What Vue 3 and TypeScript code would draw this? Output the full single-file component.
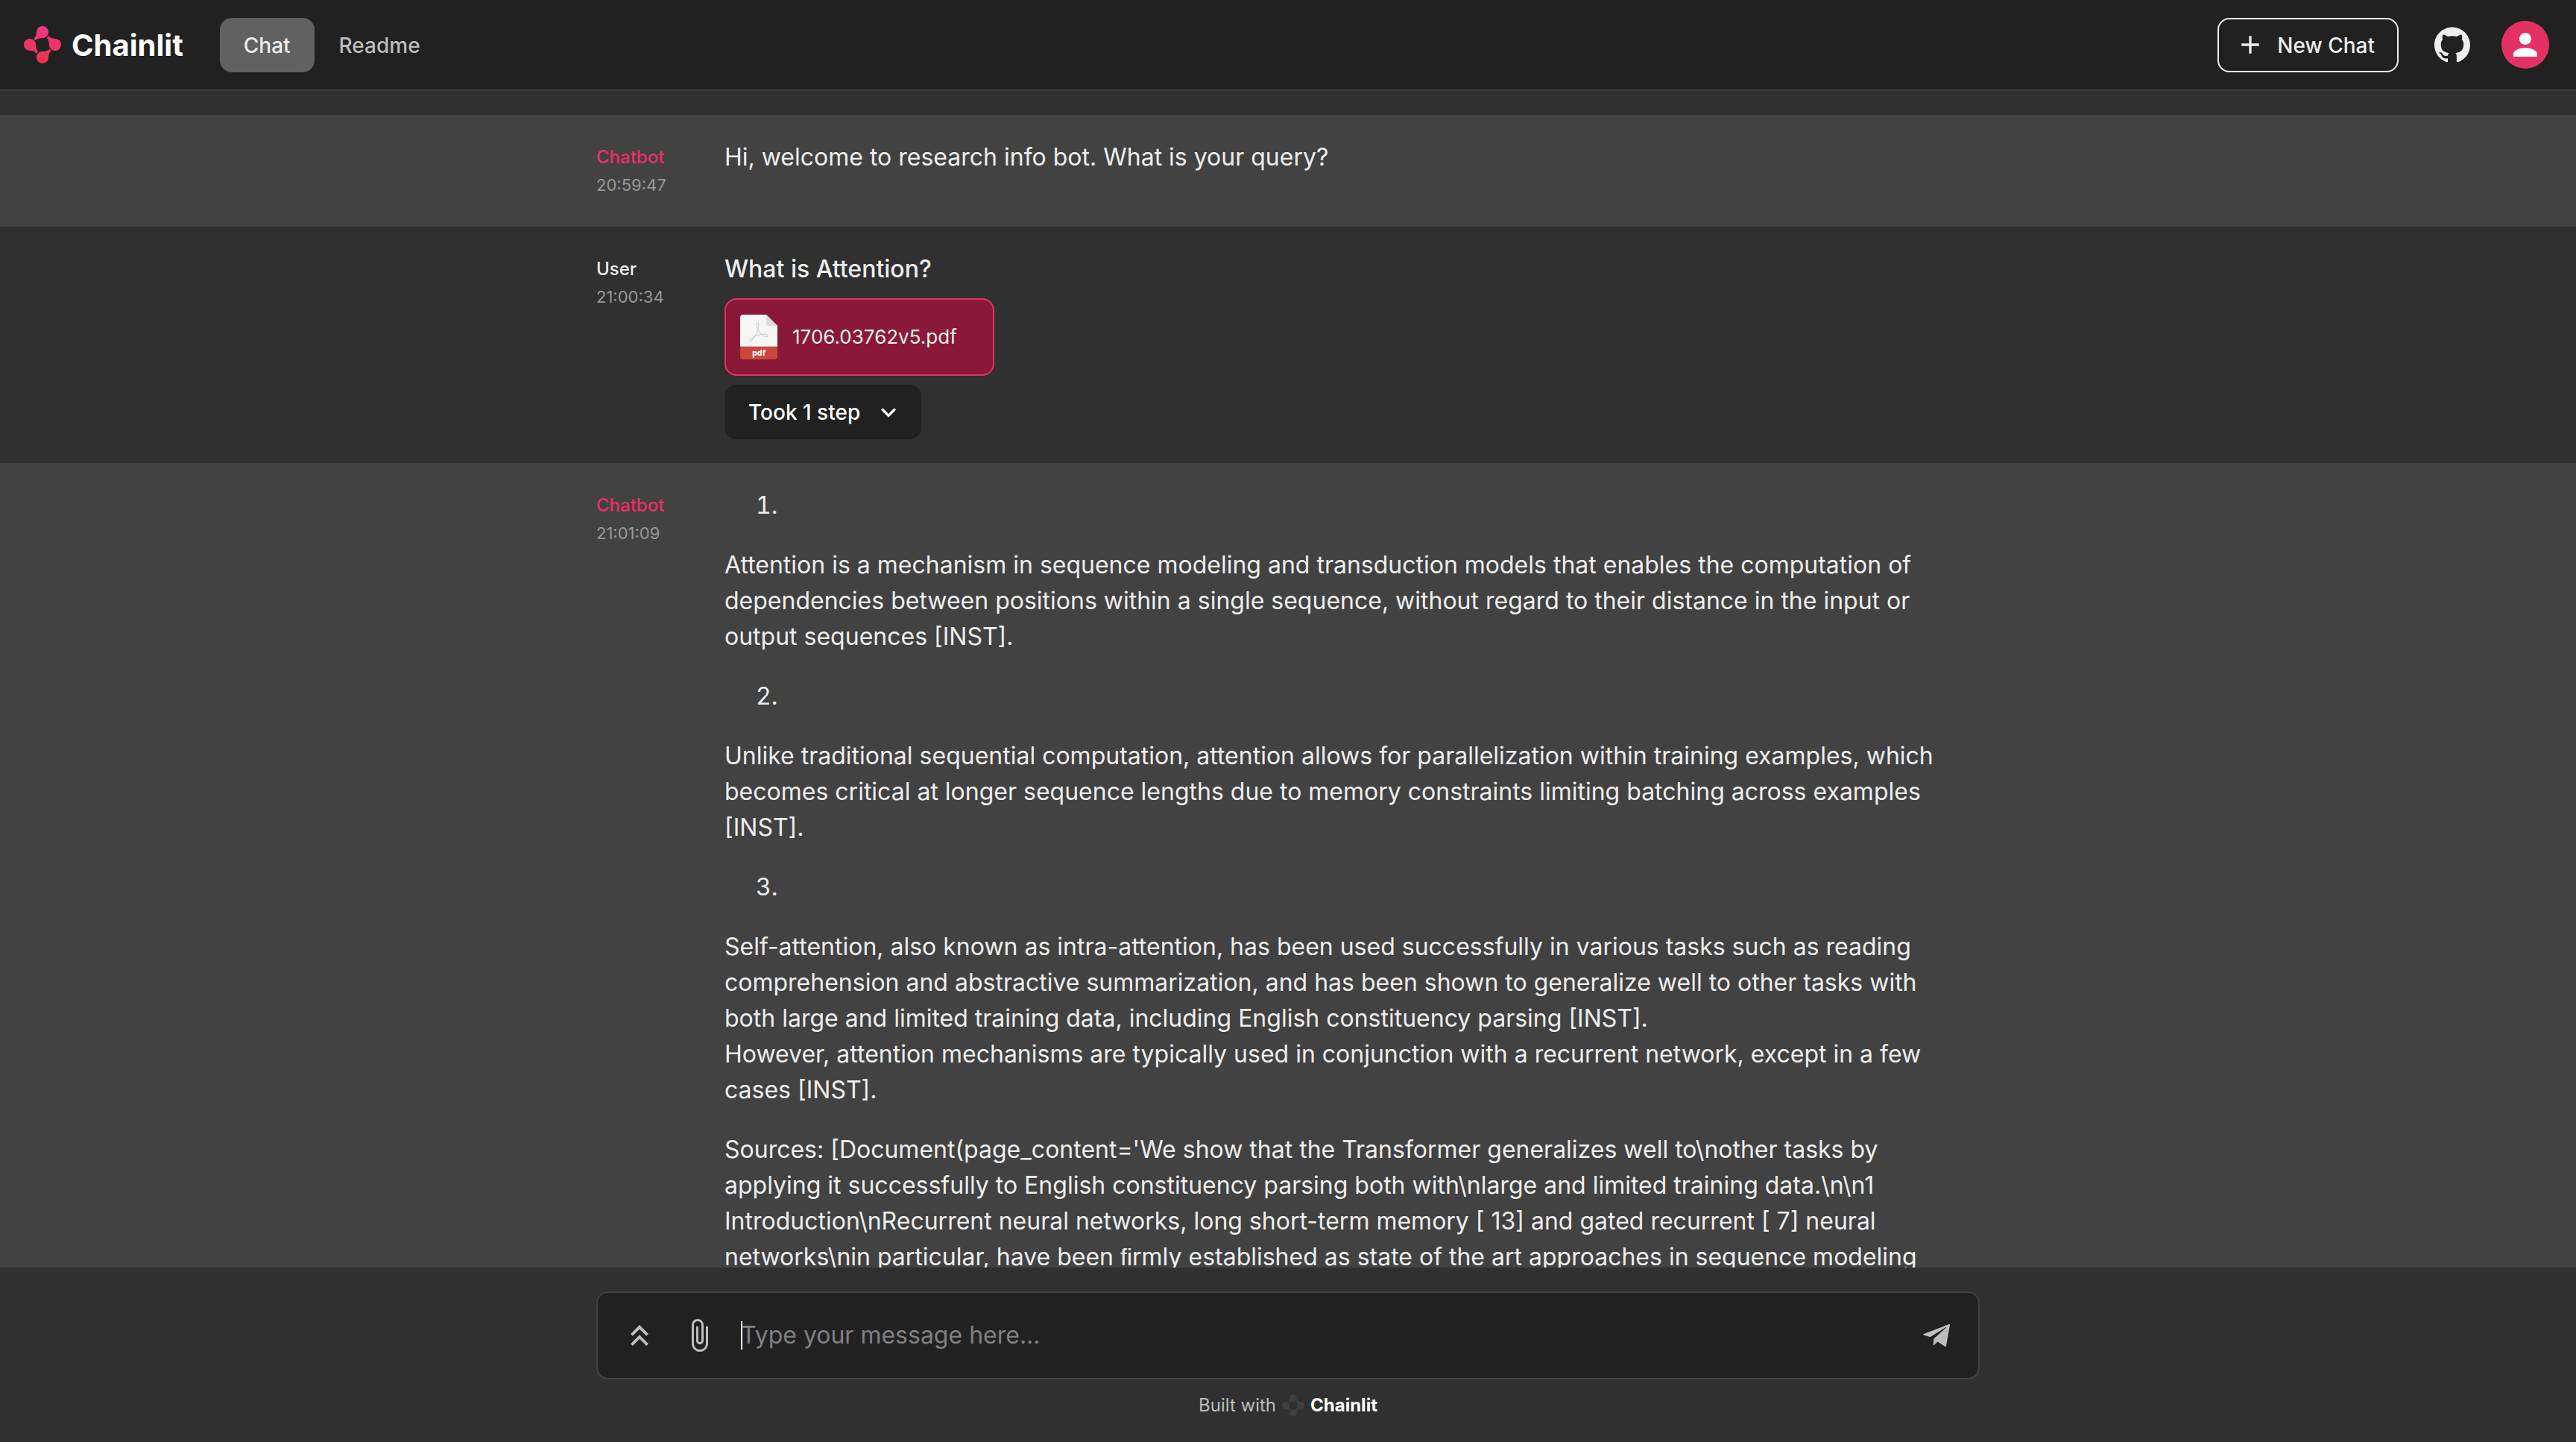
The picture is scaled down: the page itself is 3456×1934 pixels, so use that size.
<script setup lang="ts">
import { ref } from 'vue'

interface Block {
  kind: 'paragraph' | 'item'
  text?: string
  start?: number
}

interface Message {
  author: string
  time: string
  fromBot: boolean
  blocks: Block[]
  file?: string
  steps?: string
}

const draft = ref('')
const petalAngles = [0, 90, 180, 270]
const petal = 'M40 50C51 41 50 33 51 22A24 23 0 0 1 99 24C99 38 90 46 77 48C64 49 56 49 47 58Z'

const messages: Message[] = [
  {
    author: 'Chatbot',
    time: '20:59:47',
    fromBot: true,
    blocks: [{ kind: 'paragraph', text: 'Hi, welcome to research info bot. What is your query?' }],
  },
  {
    author: 'User',
    time: '21:00:34',
    fromBot: false,
    blocks: [{ kind: 'paragraph', text: 'What is Attention?' }],
    file: '1706.03762v5.pdf',
    steps: 'Took 1 step',
  },
  {
    author: 'Chatbot',
    time: '21:01:09',
    fromBot: true,
    blocks: [
      { kind: 'item', start: 1 },
      {
        kind: 'paragraph',
        text: 'Attention is a mechanism in sequence modeling and transduction models that enables the computation of dependencies between positions within a single sequence, without regard to their distance in the input or output sequences [INST].',
      },
      { kind: 'item', start: 2 },
      {
        kind: 'paragraph',
        text: 'Unlike traditional sequential computation, attention allows for parallelization within training examples, which becomes critical at longer sequence lengths due to memory constraints limiting batching across examples [INST].',
      },
      { kind: 'item', start: 3 },
      {
        kind: 'paragraph',
        text: 'Self-attention, also known as intra-attention, has been used successfully in various tasks such as reading comprehension and abstractive summarization, and has been shown to generalize well to other tasks with both large and limited training data, including English constituency parsing [INST].\nHowever, attention mechanisms are typically used in conjunction with a recurrent network, except in a few cases [INST].',
      },
      {
        kind: 'paragraph',
        text: "Sources: [Document(page_content='We show that the Transformer generalizes well to\\nother tasks by applying it successfully to English constituency parsing both with\\nlarge and limited training data.\\n\\n1 Introduction\\nRecurrent neural networks, long short-term memory [ 13] and gated recurrent [ 7] neural networks\\nin particular, have been \uFB01rmly established as state of the art approaches in sequence modeling",
      },
    ],
  },
]
</script>

<template>
  <div class="app">
    <header class="topbar">
      <a class="brand" href="#">
        <svg class="mark" viewBox="0 0 150 150" aria-hidden="true">
          <defs>
            <linearGradient id="brand-fill" x1="0" y1="0" x2="0" y2="1">
              <stop offset="0" stop-color="#ec3585" />
              <stop offset="1" stop-color="#ed344f" />
            </linearGradient>
            <clipPath id="brand-shape">
              <path v-for="a in petalAngles" :key="a" :d="petal" :transform="`rotate(${a} 75 75)`" />
            </clipPath>
          </defs>
          <rect width="150" height="150" fill="url(#brand-fill)" clip-path="url(#brand-shape)" />
        </svg>
        <span class="wordmark">Chainlit</span>
      </a>
      <nav class="tabs">
        <button class="tab active" type="button">Chat</button>
        <button class="tab" type="button">Readme</button>
      </nav>
      <div class="actions">
        <button class="new-chat" type="button">
          <svg class="icon-md" viewBox="0 0 24 24" aria-hidden="true"><path d="M19 13h-6v6h-2v-6H5v-2h6V5h2v6h6v2z" /></svg>
          <span>New Chat</span>
        </button>
        <a class="github" href="#" aria-label="GitHub">
          <svg class="icon-lg" viewBox="0 0 24 24" aria-hidden="true">
            <path d="M12 .297c-6.63 0-12 5.373-12 12 0 5.303 3.438 9.8 8.205 11.385.6.113.82-.258.82-.577 0-.285-.01-1.04-.015-2.04-3.338.724-4.042-1.61-4.042-1.61C4.422 18.07 3.633 17.7 3.633 17.7c-1.087-.744.084-.729.084-.729 1.205.084 1.838 1.236 1.838 1.236 1.07 1.835 2.809 1.305 3.495.998.108-.776.417-1.305.76-1.605-2.665-.3-5.466-1.332-5.466-5.93 0-1.31.465-2.38 1.235-3.22-.135-.303-.54-1.523.105-3.176 0 0 1.005-.322 3.3 1.23.96-.267 1.98-.399 3-.405 1.02.006 2.04.138 3 .405 2.28-1.552 3.285-1.23 3.285-1.23.645 1.653.24 2.873.12 3.176.765.84 1.23 1.91 1.23 3.22 0 4.61-2.805 5.625-5.475 5.92.42.36.81 1.096.81 2.22 0 1.606-.015 2.896-.015 3.286 0 .315.21.69.825.57C20.565 22.092 24 17.592 24 12.297c0-6.627-5.373-12-12-12" />
          </svg>
        </a>
        <button class="avatar" type="button" aria-label="Account">
          <svg class="icon-lg" viewBox="0 0 24 24" aria-hidden="true">
            <path d="M12 12c2.21 0 4-1.79 4-4s-1.79-4-4-4-4 1.79-4 4 1.79 4 4 4zm0 2c-2.67 0-8 1.34-8 4v2h16v-2c0-2.66-5.33-4-8-4z" />
          </svg>
        </button>
      </div>
    </header>

    <main class="thread">
      <article v-for="m in messages" :key="m.time" class="message" :class="{ bot: m.fromBot }">
        <div class="message-inner">
          <div class="meta">
            <span class="author">{{ m.author }}</span>
            <time class="time">{{ m.time }}</time>
          </div>
          <div class="content">
            <div class="blocks">
              <template v-for="(b, i) in m.blocks" :key="i">
                <ol v-if="b.kind === 'item'" class="list" :start="b.start"><li></li></ol>
                <p v-else class="text">{{ b.text }}</p>
              </template>
            </div>
            <a v-if="m.file" class="file" href="#">
              <svg class="file-icon" viewBox="0 0 50 60" aria-hidden="true">
                <path d="M4 0H35L50 15V43H0V4A4 4 0 0 1 4 0Z" fill="#f6f6f6" />
                <path d="M35 0L50 15H39A4 4 0 0 1 35 11Z" fill="#dcdcdc" />
                <path d="M0 42H50V43H0Z" fill="#d0d0d0" />
                <path d="M0 43H50V56A4 4 0 0 1 46 60H4A4 4 0 0 1 0 56Z" fill="#c9483a" />
                <path d="M24 11C20 11 23 20 27 25C31 30 38 31 37 28C36 25 28 26 22 28C16 30 12 34 13 35.500C15 37 20 30 23 23C25 17 26 11 24 11Z" fill="none" stroke="#d2d2d2" stroke-width="1.200" />
                <text x="25" y="55" text-anchor="middle" class="file-ext">pdf</text>
              </svg>
              <span>{{ m.file }}</span>
            </a>
            <button v-if="m.steps" class="steps" type="button">
              {{ m.steps }}
              <svg class="icon-md" viewBox="0 0 24 24" aria-hidden="true"><path d="M16.59 8.59 12 13.17 7.41 8.59 6 10l6 6 6-6z" /></svg>
            </button>
          </div>
        </div>
      </article>
    </main>

    <footer class="dock">
      <form class="composer" @submit.prevent>
        <button class="tool" type="button" aria-label="Show history">
          <svg class="icon-lg" viewBox="0 0 24 24" aria-hidden="true">
            <path d="M6 17.590 7.410 19 12 14.420 16.590 19 18 17.590l-6-6z" />
            <path d="m6 11 1.410 1.410L12 7.830l4.590 4.580L18 11l-6-6z" />
          </svg>
        </button>
        <button class="tool" type="button" aria-label="Attach files">
          <svg class="icon-lg" viewBox="0 0 24 24" aria-hidden="true">
            <path d="M16.5 6v11.5c0 2.21-1.79 4-4 4s-4-1.79-4-4V5c0-1.38 1.12-2.5 2.5-2.5s2.5 1.12 2.5 2.5v10.5c0 .55-.45 1-1 1s-1-.45-1-1V6H10v9.5c0 1.38 1.12 2.5 2.5 2.5s2.5-1.12 2.5-2.5V5c0-2.21-1.79-4-4-4S7 2.79 7 5v12.5c0 3.04 2.46 5.5 5.5 5.5s5.5-2.46 5.5-5.5V6h-1.500z" />
          </svg>
        </button>
        <label class="field">
          <span class="caret"></span>
          <input v-model="draft" type="text" placeholder="Type your message here..." aria-label="Message" />
        </label>
        <button class="tool" type="submit" aria-label="Send message">
          <svg class="send" viewBox="0 0 36 30" aria-hidden="true">
            <path d="M0.500 13.200L34.800 0.100Q36.200 0 36 1.400L31 29Q30.600 30.300 29.300 29.800L19.500 23.600L14.600 28.200Q13.700 28.700 13.700 27.600L14.400 19.500L31.200 4.500L30.700 4L9.600 17.300L0.600 14.500Q-0.400 13.800 0.500 13.200Z" />
          </svg>
        </button>
      </form>
      <a class="credit" href="#">
        <span>Built with</span>
        <svg class="credit-mark" viewBox="0 0 150 150" aria-hidden="true">
          <path v-for="a in petalAngles" :key="a" :d="petal" :transform="`rotate(${a} 75 75)`" />
        </svg>
        <span class="credit-name">Chainlit</span>
      </a>
    </footer>
  </div>
</template>

<style>
body {
  background: #303030;
}
</style>

<style scoped>
.app {
  display: flex;
  flex-direction: column;
  height: 100vh;
  background: #303030;
  color: #eeeeee;
  font-family: Inter, sans-serif;
  font-size: 32px;
  line-height: 48px;
}
.app * {
  box-sizing: border-box;
}
a {
  color: inherit;
  text-decoration: none;
}
button {
  font: inherit;
  color: inherit;
  border: 0;
  background: none;
  padding: 0;
  cursor: pointer;
}
svg {
  display: block;
  flex: none;
  fill: currentColor;
}
.icon-md {
  width: 40px;
  height: 40px;
}
.icon-lg {
  width: 48px;
  height: 48px;
}
.topbar {
  display: flex;
  align-items: center;
  flex: none;
  height: 122px;
  padding: 0 36px 0 32px;
  background: #212121;
  border-bottom: 2px solid #424242;
}
.brand {
  display: flex;
  align-items: center;
  gap: 14px;
  color: #ffffff;
}
.mark {
  width: 50px;
  height: 50px;
}
.wordmark {
  padding-top: 1px;
  font-weight: 700;
  font-size: 40px;
}
.tabs {
  display: flex;
  gap: 1px;
  margin-left: 49px;
}
.tab {
  height: 73px;
  padding: 2px 32px 0;
  border-radius: 16px;
  color: #bdbdbd;
  font-size: 28px;
  font-weight: 500;
}
.tab.active {
  background: #616161;
  color: #eeeeee;
}
.actions {
  display: flex;
  align-items: center;
  margin-left: auto;
}
.new-chat {
  display: flex;
  align-items: center;
  gap: 16px;
  height: 73px;
  padding: 0 30px 0 22px;
  border: 2px solid #eeeeee;
  border-radius: 16px;
  font-size: 28px;
  font-weight: 500;
}
.new-chat span {
  padding-top: 2px;
}
.github {
  margin: 0 42px 0 48px;
}
.avatar {
  display: flex;
  align-items: center;
  justify-content: center;
  width: 64px;
  height: 64px;
  border-radius: 50%;
  background: #e43163;
  color: #ffffff;
}
.thread {
  flex: 1;
  min-height: 0;
  padding-top: 32px;
  overflow-y: auto;
  scrollbar-width: none;
}
.message {
  padding: 33px 32px 32px;
}
.message.bot {
  background: #424242;
}
.message-inner {
  display: flex;
  max-width: 1856px;
  margin: 0 auto;
}
.meta {
  display: flex;
  flex-direction: column;
  flex: none;
  width: 172px;
  padding-bottom: 11px;
}
.author {
  font-size: 24px;
  font-weight: 500;
}
.bot .author {
  color: #f02c68;
}
.time {
  color: #989898;
  font-size: 22px;
  line-height: 26px;
}
.content {
  display: flex;
  flex-direction: column;
  align-items: flex-start;
  flex: 1;
  min-width: 0;
  font-weight: 500;
}
.bot .content {
  font-weight: 400;
}
.blocks {
  display: flex;
  flex-direction: column;
  gap: 32px;
  padding-right: 32px;
}
.text,
.list {
  margin: 0;
}
.text {
  white-space: pre-line;
}
.list {
  padding-left: 80px;
}
.list li {
  min-height: 48px;
}
.file {
  display: flex;
  align-items: center;
  gap: 20px;
  min-width: 362px;
  height: 104px;
  margin: 15px 0 12px;
  padding: 0 19px;
  border: 2px solid #e43163;
  border-radius: 16px;
  background: #8a1838;
  font-size: 26px;
  font-weight: 400;
}
.file-icon {
  width: 50px;
  height: 60px;
}
.file-ext {
  fill: #ffffff;
  font-family: "Open Sans", sans-serif;
  font-size: 11px;
  font-weight: 700;
}
.steps {
  display: flex;
  align-items: center;
  gap: 18px;
  height: 73px;
  padding: 0 24px 0 32px;
  border-radius: 16px;
  background: #212121;
  color: #ffffff;
  font-size: 28px;
  font-weight: 500;
}
.dock {
  display: flex;
  flex-direction: column;
  align-items: center;
  flex: none;
  padding: 32px 32px 25px;
}
.composer {
  display: flex;
  align-items: center;
  width: 100%;
  max-width: 1856px;
  height: 118px;
  padding: 0 16px;
  border: 2px solid #424242;
  border-radius: 16px;
  background: #212121;
}
.tool {
  display: flex;
  align-items: center;
  justify-content: center;
  width: 80px;
  height: 80px;
  color: #bdbdbd;
}
.send {
  width: 36px;
  height: 30px;
}
.field {
  display: flex;
  align-items: center;
  flex: 1;
  margin-left: 16px;
}
.caret {
  width: 2px;
  height: 38px;
  margin-right: -2px;
  background: #ffffff;
}
.field input {
  flex: 1;
  min-width: 0;
  padding: 0;
  border: 0;
  outline: 0;
  background: none;
  color: inherit;
  font: inherit;
}
.field input::placeholder {
  color: #808080;
  opacity: 1;
}
.credit {
  display: flex;
  align-items: center;
  gap: 8px;
  margin-top: 11px;
  color: #bdbdbd;
  font-size: 24px;
}
.credit-mark {
  width: 30px;
  height: 30px;
  fill: #3f3f3f;
}
.credit-name {
  color: #ffffff;
  font-weight: 700;
}
</style>
